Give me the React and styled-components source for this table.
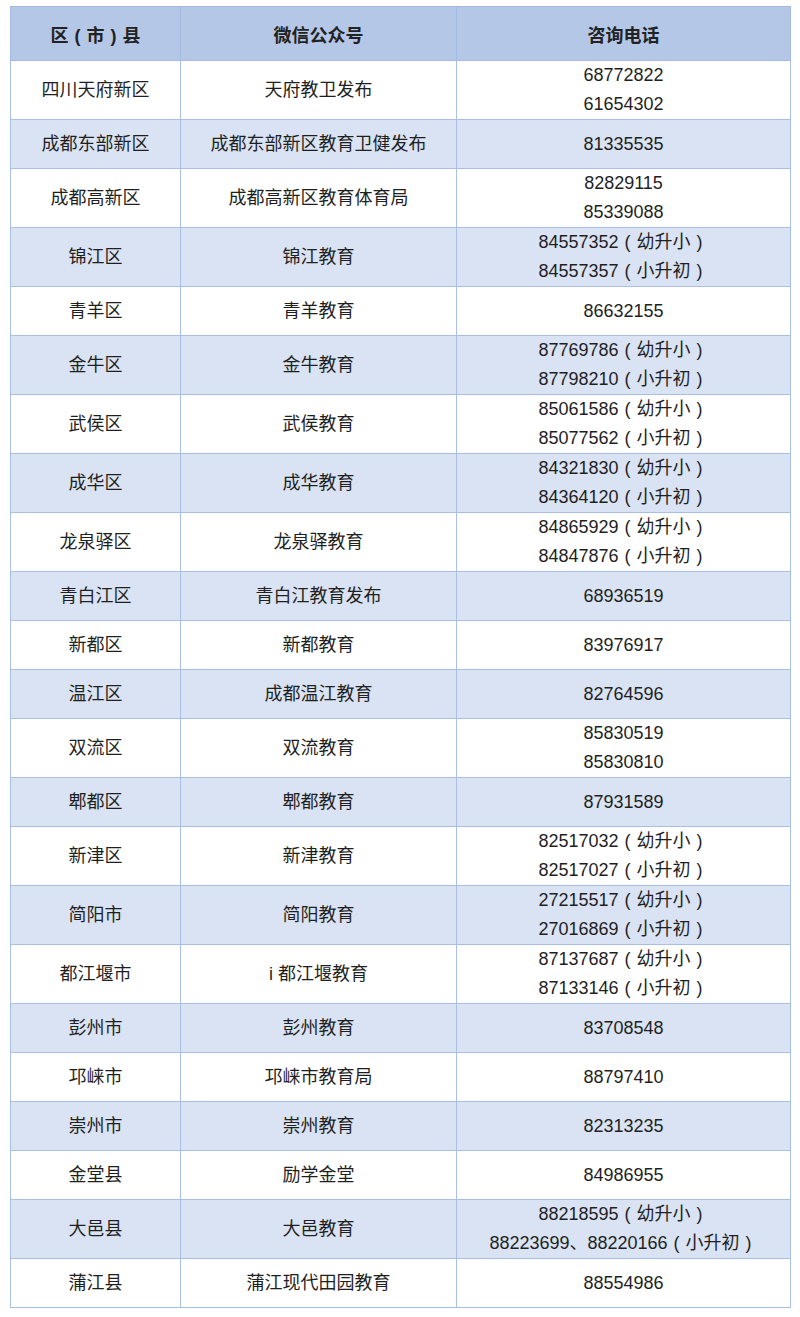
import React from "react"
import styled, { createGlobalStyle } from "styled-components"

const GlobalStyle = createGlobalStyle`
  body {
    margin: 0;
    background: #fff;
    font-family: "Liberation Sans", "Noto Sans CJK SC", sans-serif;
    color: #1f1f1f;
  }
`

const Page = styled.div`
  padding: 6px 10px 12px 10px;
`

const Table = styled.table`
  width: 780px;
  border-collapse: collapse;
  table-layout: fixed;
  font-size: 18px;
`

const HeadCell = styled.th`
  height: 53px;
  padding: 0;
  background: #b4c7e7;
  border: 1px solid #a3bbe3;
  font-weight: bold;
  text-align: center;
  vertical-align: middle;
  color: #222;
`

const Row = styled.tr`
  background: ${(p) => (p.$alt ? "#dae3f3" : "#ffffff")};
`

const Cell = styled.td`
  height: ${(p) => (p.$tall ? 58 : 48)}px;
  padding: 0;
  border: 1px solid #a9c0e6;
  text-align: center;
  vertical-align: middle;
  line-height: 29px;
`

const Line = styled.div`
  white-space: nowrap;
`

/* full-width bracket with the glyph centred in its box */
const Paren = styled.span`
  display: inline-block;
  width: 1em;
  text-align: center;
`

const rows = [
  ["四川天府新区", "天府教卫发布", ["68772822", "61654302"]],
  ["成都东部新区", "成都东部新区教育卫健发布", ["81335535"]],
  ["成都高新区", "成都高新区教育体育局", ["82829115", "85339088"]],
  ["锦江区", "锦江教育", ["84557352|幼升小", "84557357|小升初"]],
  ["青羊区", "青羊教育", ["86632155"]],
  ["金牛区", "金牛教育", ["87769786|幼升小", "87798210|小升初"]],
  ["武侯区", "武侯教育", ["85061586|幼升小", "85077562|小升初"]],
  ["成华区", "成华教育", ["84321830|幼升小", "84364120|小升初"]],
  ["龙泉驿区", "龙泉驿教育", ["84865929|幼升小", "84847876|小升初"]],
  ["青白江区", "青白江教育发布", ["68936519"]],
  ["新都区", "新都教育", ["83976917"]],
  ["温江区", "成都温江教育", ["82764596"]],
  ["双流区", "双流教育", ["85830519", "85830810"]],
  ["郫都区", "郫都教育", ["87931589"]],
  ["新津区", "新津教育", ["82517032|幼升小", "82517027|小升初"]],
  ["简阳市", "简阳教育", ["27215517|幼升小", "27016869|小升初"]],
  ["都江堰市", "i 都江堰教育", ["87137687|幼升小", "87133146|小升初"]],
  ["彭州市", "彭州教育", ["83708548"]],
  ["邛崃市", "邛崃市教育局", ["88797410"]],
  ["崇州市", "崇州教育", ["82313235"]],
  ["金堂县", "励学金堂", ["84986955"]],
  ["大邑县", "大邑教育", ["88218595|幼升小", "88223699、88220166|小升初"]],
  ["蒲江县", "蒲江现代田园教育", ["88554986"]],
]

function Phone({ value }) {
  const [num, note] = value.split("|")
  return (
    <Line>
      {num}
      {note && (
        <>
          <Paren>(</Paren>
          {note}
          <Paren>)</Paren>
        </>
      )}
    </Line>
  )
}

export default function App() {
  return (
    <Page>
      <GlobalStyle />
      <Table>
        <colgroup>
          <col style={{ width: 170 }} />
          <col style={{ width: 276 }} />
          <col style={{ width: 334 }} />
        </colgroup>
        <thead>
          <tr>
            <HeadCell>
              区<Paren>(</Paren>市<Paren>)</Paren>县
            </HeadCell>
            <HeadCell>微信公众号</HeadCell>
            <HeadCell>咨询电话</HeadCell>
          </tr>
        </thead>
        <tbody>
          {rows.map(([area, account, phones], i) => {
            const tall = phones.length > 1
            return (
              <Row key={area} $alt={i % 2 === 1}>
                <Cell $tall={tall}>{area}</Cell>
                <Cell $tall={tall}>{account}</Cell>
                <Cell $tall={tall}>
                  {phones.map((p) => (
                    <Phone key={p} value={p} />
                  ))}
                </Cell>
              </Row>
            )
          })}
        </tbody>
      </Table>
    </Page>
  )
}
